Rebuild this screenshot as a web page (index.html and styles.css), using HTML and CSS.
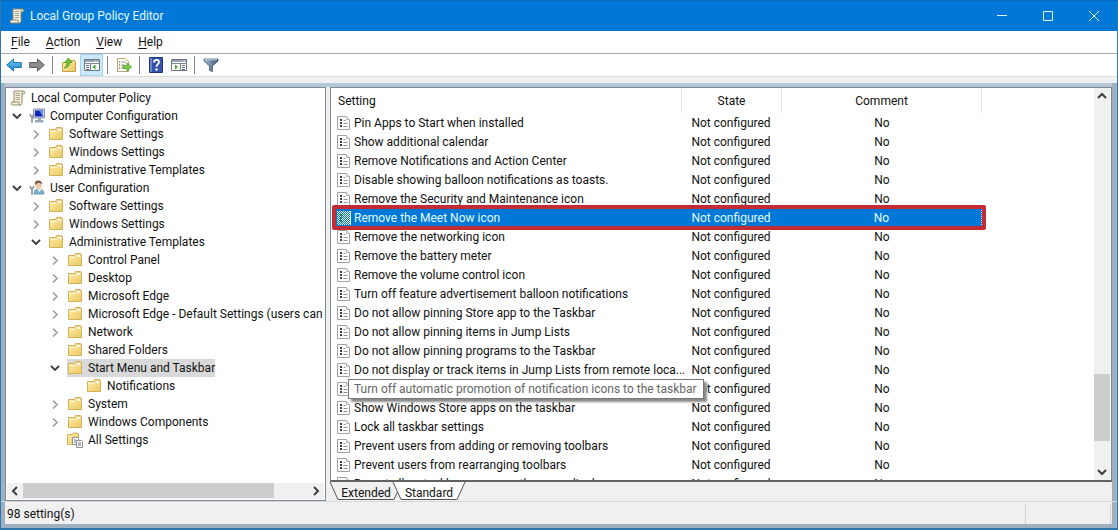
FILE: index.html
```html
<!DOCTYPE html>
<html lang="en">
<head>
<meta charset="utf-8">
<title>Local Group Policy Editor</title>
<link rel="stylesheet" href="styles.css">
</head>
<body>
<svg class="defs" aria-hidden="true">
  <defs>
    <linearGradient id="gold" x1="0" y1="0" x2="1" y2="1"><stop offset="0" stop-color="#fff0ad"/><stop offset="1" stop-color="#ecc75f"/></linearGradient>
    <linearGradient id="blue" x1="0" y1="0" x2="0" y2="1"><stop offset="0" stop-color="#7cc8f2"/><stop offset="1" stop-color="#1583cc"/></linearGradient>
    <linearGradient id="steel" x1="0" y1="0" x2="1" y2="0"><stop offset="0" stop-color="#9fb9d0"/><stop offset="1" stop-color="#3f5a75"/></linearGradient>
    <symbol id="folder" viewBox="0 0 16 16"><path d="M1.500 3.500h6l1-2h5l1 1.500v10.500h-13z" fill="url(#gold)" stroke="#d3b05c"/><path d="M8.500 4.500h5v-2h-4z" fill="#fffbe8" stroke="#dcb95e" stroke-width=".6"/><path d="M2 5.500h7l1-1h4" fill="none" stroke="#fff6cf"/></symbol>
    <symbol id="scroll" viewBox="0 0 16 16"><path d="M4 1h9.500c1.500 0 1.500 3 0 3H12v8.500c0 2-1 2.500-2 2.500H2.500c-1.800 0-1.800-3 0-3H4z" fill="#f6f2dc" stroke="#8f8a74"/><path d="M12 4V2.500C12 1.700 12.600 1 13.300 1M2.500 12H9c0 1.500.3 3 1.500 3" fill="none" stroke="#8f8a74"/><path d="M5.500 3.500h4.500M5.500 5.500h4.500M5.500 7.500h4.500M5.500 9.500h4.500" stroke="#a9a487"/></symbol>
    <symbol id="computer" viewBox="0 0 16 16"><path d="M4.500 1h11v9h-11z" fill="#c8d2e4" stroke="#7483a5" stroke-width=".8"/><path d="M6 2.500h8v6H6z" fill="#1029b5"/><path d="M10 2.500h4v6z" fill="#6e8df0"/><path d="M9 10h3v2H9zM6 12h8.500v2.500H6z" fill="#9ba6b8"/><path d="M1.500 6v2M4.500 6v2M1.500 8.500h3M3 8v7" stroke="#7d8792" stroke-width="1.400" fill="none"/></symbol>
    <symbol id="user" viewBox="0 0 16 16"><path d="M5 14c0-4 2-5 5-5s5 1.500 5 5z" fill="#7fb3cd" stroke="#487d99" stroke-width=".7"/><path d="M8.500 9l2 3 2-3z" fill="#fff"/><ellipse cx="9.500" cy="5" rx="3" ry="4" fill="#efc5a3"/><path d="M6 5C5.500 1 8 .5 9.500 .5s4 1 3.300 4.500C12 3 10.500 2.500 8.500 3z" fill="#70533f"/><path d="M1.500 6v2M4.500 6v2M1.500 8.500h3M3 8v7" stroke="#7d8792" stroke-width="1.400" fill="none"/></symbol>
    <symbol id="all" viewBox="0 0 16 16"><path d="M.500 2.500h5l1-1.500h4l1 1.500v10H.5z" fill="url(#gold)" stroke="#d3b05c"/><path d="M5.500 5.500h5l1 1v6h-6z" fill="#fff" stroke="#8b8f94"/><path d="M9.500 8.500h5l1 1v6h-6z" fill="#fff" stroke="#8b8f94"/><path d="M7 8h2M7 10h2M11 11h3M11 13h3" stroke="#697078"/></symbol>
    <symbol id="policy" viewBox="0 0 14 16"><path d="M.500 1.500h9l3 3v10h-12z" fill="#fff" stroke="#a2a2a2"/><path d="M9.500 1.500v3h3" fill="#eee" stroke="#b8b8b8"/><path d="M3 4h2v2H3zM3 7h2v2H3zM3 10h2v2H3z" fill="#3c3c48"/><path d="M6.500 5.500h2M6.500 8.500h4M6.500 11.500h4" stroke="#8e8e96"/></symbol>
    <pattern id="dots" width="2" height="2" patternUnits="userSpaceOnUse"><path d="M0 0h1v1H0zM1 1h1v1H1z" fill="#19758f"/></pattern>
    <symbol id="policy-on" viewBox="0 0 14 16"><path d="M0 1h14v14H0z" fill="#d9f2f2"/><path d="M0 1h13v14H0z" fill="url(#dots)"/><path d="M3 4h2v2H3zM3 7h2v2H3zM3 10h2v2H3z" fill="#207b68"/></symbol>
    <symbol id="right" viewBox="0 0 10 10"><path d="M3 1.500l4 4-4 4" fill="none" stroke="#a0a0a0" stroke-width="1.700"/></symbol>
    <symbol id="down" viewBox="0 0 10 10"><path d="M1 3l4 4 4-4" fill="none" stroke="#404040" stroke-width="1.900"/></symbol>
    <symbol id="arrow" viewBox="0 0 16 16"><path d="M.700 8l6.800-6v3.500h7.800v5H7.500V14z" stroke-width="1"/></symbol>
  </defs>
</svg>

<header class="titlebar">
  <svg class="app-icon" viewBox="0 0 16 16"><use href="#scroll"/></svg>
  <h1 class="title">Local Group Policy Editor</h1>
  <div class="caption">
    <button class="caption-btn" aria-label="Minimize"><svg viewBox="0 0 12 12"><path d="M1 5.500h10"/></svg></button>
    <button class="caption-btn" aria-label="Maximize"><svg viewBox="0 0 12 12"><path d="M1.500 1.500h9v9h-9z"/></svg></button>
    <button class="caption-btn" aria-label="Close"><svg viewBox="0 0 12 12"><path d="M1 1l10 10M11 1L1 11"/></svg></button>
  </div>
</header>

<nav class="menubar">
  <button class="menu"><u>F</u>ile</button>
  <button class="menu"><u>A</u>ction</button>
  <button class="menu"><u>V</u>iew</button>
  <button class="menu"><u>H</u>elp</button>
</nav>

<div class="toolbar" role="toolbar">
  <button class="tool" aria-label="Back"><svg viewBox="0 0 16 16" fill="url(#blue)" stroke="#2476a8"><use href="#arrow"/></svg></button>
  <button class="tool" aria-label="Forward"><svg class="flip" viewBox="0 0 16 16" fill="#8b8b8b" stroke="#5c5c5c"><use href="#arrow"/></svg></button>
  <span class="sep"></span>
  <button class="tool" aria-label="Up one level"><svg viewBox="0 0 16 16"><path d="M1.500 5.500h5l1-2h6l1 1.500v9.500h-13z" fill="url(#gold)" stroke="#c9a04a"/><path d="M3.500 11C7 10.500 8.500 8.500 8.500 5.500h2.500L7.500 1 3.500 5.500H6C6 8 5 9 3.500 11z" fill="#6fc531" stroke="#3f8a20" stroke-width=".7"/></svg></button>
  <button class="tool tool-on" aria-label="Show or hide console tree" aria-pressed="true"><svg viewBox="0 0 16 16"><path d="M.500 2.500h15v11H.5z" fill="#fff" stroke="#6a7480"/><path d="M1 3h14v2H1z" fill="#98a2b0"/><path d="M11 4h1M13 4h1" stroke="#fff"/><path d="M.500 6.500h15M6.500 6.500v7" stroke="#7c8794"/><path d="M2 8.500h3M2 10.500h3M2 12.500h3" stroke="#5b6b80"/><path d="M11.500 7.500v5l-3-2.500z" fill="#3fa12c"/></svg></button>
  <span class="sep"></span>
  <button class="tool" aria-label="Export list"><svg viewBox="0 0 16 16"><path d="M1.500 1.500h8l3 3v10h-11z" fill="#fffdf0" stroke="#b4a678"/><path d="M3 5h1M3 8h1M3 11h1" stroke="#444"/><path d="M5 5h5M5 8h3M5 11h3" stroke="#8c96a4"/><path d="M7 8.500h4V6l4.500 4-4.500 4v-2.500H7z" fill="#7fd14a" stroke="#44982a" stroke-width=".8"/></svg></button>
  <span class="sep"></span>
  <button class="tool" aria-label="Help"><svg viewBox="0 0 16 16"><path d="M1.500.500h13v15h-13z" fill="#3453aa" stroke="#1d3477"/><path d="M2 1h2v14H2z" fill="#7087cc"/><path d="M6 5.500C6 2 11 2 11 5c0 2.200-2.500 2.200-2.500 4.700" fill="none" stroke="#fff" stroke-width="1.800"/><circle cx="8.500" cy="12.500" r="1.200" fill="#fff"/></svg></button>
  <button class="tool" aria-label="Show or hide action pane"><svg viewBox="0 0 16 16"><path d="M.500 2.500h15v11H.5z" fill="#fff" stroke="#6a7480"/><path d="M1 3h14v2H1z" fill="#98a2b0"/><path d="M11 4h1M13 4h1" stroke="#fff"/><path d="M.500 6.500h15M9.500 6.500v7" stroke="#7c8794"/><path d="M11 8.500h3M11 10.500h3M11 12.500h3" stroke="#5b6b80"/><path d="M4 7.500v5l3-2.500z" fill="#3fa12c"/></svg></button>
  <span class="sep"></span>
  <button class="tool" aria-label="Filter"><svg viewBox="0 0 16 16"><path d="M1 2h14v2L9.500 9v5.500l-3-1V9L1 4z" fill="url(#steel)" stroke="#425d79" stroke-width=".8"/><path d="M2 2.800h12" stroke="#c6d8e8"/></svg></button>
</div>
<div class="band"></div>

<main class="work">
  <section class="pane tree-pane">
    <ul class="tree">
      <li class="node root"><svg class="ico"><use href="#scroll"/></svg><span class="label">Local Computer Policy</span></li>
      <li class="node l1"><svg class="chev"><use href="#down"/></svg><svg class="ico"><use href="#computer"/></svg><span class="label">Computer Configuration</span></li>
      <li class="node l2"><svg class="chev"><use href="#right"/></svg><svg class="ico"><use href="#folder"/></svg><span class="label">Software Settings</span></li>
      <li class="node l2"><svg class="chev"><use href="#right"/></svg><svg class="ico"><use href="#folder"/></svg><span class="label">Windows Settings</span></li>
      <li class="node l2"><svg class="chev"><use href="#right"/></svg><svg class="ico"><use href="#folder"/></svg><span class="label">Administrative Templates</span></li>
      <li class="node l1"><svg class="chev"><use href="#down"/></svg><svg class="ico"><use href="#user"/></svg><span class="label">User Configuration</span></li>
      <li class="node l2"><svg class="chev"><use href="#right"/></svg><svg class="ico"><use href="#folder"/></svg><span class="label">Software Settings</span></li>
      <li class="node l2"><svg class="chev"><use href="#right"/></svg><svg class="ico"><use href="#folder"/></svg><span class="label">Windows Settings</span></li>
      <li class="node l2"><svg class="chev"><use href="#down"/></svg><svg class="ico"><use href="#folder"/></svg><span class="label">Administrative Templates</span></li>
      <li class="node l3"><svg class="chev"><use href="#right"/></svg><svg class="ico"><use href="#folder"/></svg><span class="label">Control Panel</span></li>
      <li class="node l3"><svg class="chev"><use href="#right"/></svg><svg class="ico"><use href="#folder"/></svg><span class="label">Desktop</span></li>
      <li class="node l3"><svg class="chev"><use href="#right"/></svg><svg class="ico"><use href="#folder"/></svg><span class="label">Microsoft Edge</span></li>
      <li class="node l3"><svg class="chev"><use href="#right"/></svg><svg class="ico"><use href="#folder"/></svg><span class="label">Microsoft Edge - Default Settings (users can override)</span></li>
      <li class="node l3"><svg class="chev"><use href="#right"/></svg><svg class="ico"><use href="#folder"/></svg><span class="label">Network</span></li>
      <li class="node l3"><svg class="chev"></svg><svg class="ico"><use href="#folder"/></svg><span class="label">Shared Folders</span></li>
      <li class="node l3"><svg class="chev"><use href="#down"/></svg><span class="picked"><svg class="ico"><use href="#folder"/></svg><span class="label">Start Menu and Taskbar</span></span></li>
      <li class="node l4"><svg class="chev"></svg><svg class="ico"><use href="#folder"/></svg><span class="label">Notifications</span></li>
      <li class="node l3"><svg class="chev"><use href="#right"/></svg><svg class="ico"><use href="#folder"/></svg><span class="label">System</span></li>
      <li class="node l3"><svg class="chev"><use href="#right"/></svg><svg class="ico"><use href="#folder"/></svg><span class="label">Windows Components</span></li>
      <li class="node l3"><svg class="chev"></svg><svg class="ico"><use href="#all"/></svg><span class="label">All Settings</span></li>
    </ul>
    <div class="hbar">
      <button class="bar-btn" aria-label="Scroll left"><svg viewBox="0 0 10 10"><path d="M7 1L3 5l4 4"/></svg></button>
      <div class="hbar-track"><div class="hbar-thumb"></div></div>
      <button class="bar-btn" aria-label="Scroll right"><svg viewBox="0 0 10 10"><path d="M3 1l4 4-4 4"/></svg></button>
    </div>
  </section>

  <section class="detail">
    <div class="pane list-pane">
      <div class="list">
        <table class="grid">
          <colgroup><col class="c-setting"><col class="c-state"><col class="c-comment"></colgroup>
          <thead><tr><th class="first">Setting</th><th>State</th><th>Comment</th></tr></thead>
          <tbody>
            <tr><td><svg class="pol"><use href="#policy"/></svg>Pin Apps to Start when installed</td><td>Not configured</td><td>No</td></tr>
            <tr><td><svg class="pol"><use href="#policy"/></svg>Show additional calendar</td><td>Not configured</td><td>No</td></tr>
            <tr><td><svg class="pol"><use href="#policy"/></svg>Remove Notifications and Action Center</td><td>Not configured</td><td>No</td></tr>
            <tr><td><svg class="pol"><use href="#policy"/></svg>Disable showing balloon notifications as toasts.</td><td>Not configured</td><td>No</td></tr>
            <tr><td><svg class="pol"><use href="#policy"/></svg>Remove the Security and Maintenance icon</td><td>Not configured</td><td>No</td></tr>
            <tr class="selected"><td><svg class="pol"><use href="#policy-on"/></svg>Remove the Meet Now icon</td><td>Not configured</td><td>No</td></tr>
            <tr><td><svg class="pol"><use href="#policy"/></svg>Remove the networking icon</td><td>Not configured</td><td>No</td></tr>
            <tr><td><svg class="pol"><use href="#policy"/></svg>Remove the battery meter</td><td>Not configured</td><td>No</td></tr>
            <tr><td><svg class="pol"><use href="#policy"/></svg>Remove the volume control icon</td><td>Not configured</td><td>No</td></tr>
            <tr><td><svg class="pol"><use href="#policy"/></svg>Turn off feature advertisement balloon notifications</td><td>Not configured</td><td>No</td></tr>
            <tr><td><svg class="pol"><use href="#policy"/></svg>Do not allow pinning Store app to the Taskbar</td><td>Not configured</td><td>No</td></tr>
            <tr><td><svg class="pol"><use href="#policy"/></svg>Do not allow pinning items in Jump Lists</td><td>Not configured</td><td>No</td></tr>
            <tr><td><svg class="pol"><use href="#policy"/></svg>Do not allow pinning programs to the Taskbar</td><td>Not configured</td><td>No</td></tr>
            <tr><td><svg class="pol"><use href="#policy"/></svg>Do not display or track items in Jump Lists from remote loca...</td><td>Not configured</td><td>No</td></tr>
            <tr><td><svg class="pol"><use href="#policy"/></svg><span class="tip">Turn off automatic promotion of notification icons to the taskbar</span></td><td>Not configured</td><td>No</td></tr>
            <tr><td><svg class="pol"><use href="#policy"/></svg>Show Windows Store apps on the taskbar</td><td>Not configured</td><td>No</td></tr>
            <tr><td><svg class="pol"><use href="#policy"/></svg>Lock all taskbar settings</td><td>Not configured</td><td>No</td></tr>
            <tr><td><svg class="pol"><use href="#policy"/></svg>Prevent users from adding or removing toolbars</td><td>Not configured</td><td>No</td></tr>
            <tr><td><svg class="pol"><use href="#policy"/></svg>Prevent users from rearranging toolbars</td><td>Not configured</td><td>No</td></tr>
            <tr><td><svg class="pol"><use href="#policy"/></svg>Do not allow taskbars on more than one display</td><td>Not configured</td><td>No</td></tr>
          </tbody>
        </table>
      </div>
      <div class="vbar">
        <button class="bar-btn" aria-label="Scroll up"><svg viewBox="0 0 10 10"><path d="M1 7l4-4 4 4"/></svg></button>
        <div class="vbar-track"><div class="vbar-thumb"></div></div>
        <button class="bar-btn" aria-label="Scroll down"><svg viewBox="0 0 10 10"><path d="M1 3l4 4 4-4"/></svg></button>
      </div>
    </div>
    <div class="tabs" role="tablist">
      <button class="tab" role="tab"><svg class="tab-shape" viewBox="0 0 72 18" preserveAspectRatio="none"><path d="M0 0l8 17.500h56L72 0" fill="#f0f0f0" stroke="#555"/></svg><span class="tab-text">Extended</span></button>
      <button class="tab tab-on" role="tab" aria-selected="true"><svg class="tab-shape" viewBox="0 0 72 18" preserveAspectRatio="none"><path d="M0 0l8 17.500h56L72 0" fill="#fff" stroke="#555"/></svg><span class="tab-text">Standard</span></button>
    </div>
  </section>
</main>

<footer class="status"><span class="status-main">98 setting(s)</span><span class="status-cell"></span><span class="status-cell end"></span></footer>
</body>
</html>
```
FILE: styles.css
```css
*, *::after { box-sizing: border-box; }

body {
  margin: 0;
  height: 100vh;
  display: flex;
  flex-direction: column;
  overflow: hidden;
  background: #f0f0f0;
  border: 1px solid #2f76ad;
  border-top-color: #0b69b8;
  border-bottom-width: 2px;
  font: 12px/18px Roboto, "Open Sans", sans-serif;
  color: #111;
}

button {
  margin: 0;
  padding: 0;
  border: 0;
  background: none;
  font: inherit;
  color: inherit;
}

svg { display: block; flex: none; }
.defs { position: absolute; width: 0; height: 0; }

.titlebar {
  flex: none;
  display: flex;
  align-items: center;
  height: 30px;
  padding-left: 8px;
  background: #0078d7;
  color: #e2fbff;
}
.app-icon { width: 16px; height: 16px; }
.title { flex: 1; margin: 0 0 0 5px; font-size: 12px; font-weight: 400; }
.caption { display: flex; }
.caption-btn { display: grid; place-items: center; width: 46px; height: 30px; }
.caption-btn svg { width: 12px; height: 12px; fill: none; stroke: #e2fbff; }

.menubar {
  flex: none;
  display: flex;
  gap: 16px;
  height: 23px;
  padding: 2px 10px;
  background: #fff;
  border-bottom: 1px solid #a7abad;
}
.menu u { text-underline-offset: 2px; }

.toolbar {
  flex: none;
  display: flex;
  align-items: center;
  height: 23px;
  padding-left: 1px;
  background: #fff;
  border-bottom: 1px solid #dcdcdc;
}
.tool { display: grid; place-items: center; width: 23px; height: 22px; }
.tool svg { width: 16px; height: 16px; }
.tool .flip { transform: scaleX(-1); }
.tool-on { background: #cce8fb; border: 1px solid #a5d3f2; }
.sep { width: 1px; height: 18px; margin: 0 4px; background: #858585; }
.band { flex: none; height: 6px; background: #f0f0f0; }

.work {
  flex: 1;
  min-height: 0;
  display: flex;
  gap: 4px;
  padding: 4px 5px 0 4px;
  background: linear-gradient(#b6c8d6 0 4px, #f0f0f0 4px);
  box-shadow: inset 4px 0 #9db1c1, inset -5px 0 #9db1c1;
}
.pane { background: #fff; border: 1px solid #7b8895; }
.tree-pane {
  width: 29%;
  flex: none;
  display: flex;
  flex-direction: column;
  overflow: hidden;
}
.tree { flex: 1; min-height: 0; margin: 0; padding: 1px 0 0 4px; list-style: none; overflow: hidden; }
.node, .picked { display: flex; align-items: center; height: 18px; white-space: nowrap; }
.ico { width: 16px; height: 16px; }
.chev { width: 10px; height: 10px; margin-right: 7px; }
.label { padding-left: 5px; }
.l1 { padding-left: 2px; }
.l2 { padding-left: 21px; }
.l3 { padding-left: 40px; }
.l4 { padding-left: 59px; }
.picked { background: #d9d9d9; }

.hbar { flex: none; display: flex; height: 17px; padding: 0 1px 2px; }
.bar-btn { flex: none; display: grid; place-items: center; width: 16px; height: 16px; background: #f0f0f0; }
.bar-btn svg { width: 10px; height: 10px; fill: none; stroke: #404040; stroke-width: 2; }
.hbar-track { flex: 1; background: #f0f0f0; height: 16px; }
.hbar-thumb { width: 88%; height: 15px; background: #cdcdcd; }

.detail { flex: 1; min-width: 0; display: flex; flex-direction: column; }
.list-pane { flex: 1; min-height: 0; display: flex; border-bottom: 2px solid #626262; }
.list { flex: 1; min-width: 0; padding-left: 1px; overflow: hidden; }
.grid { width: 650px; table-layout: fixed; border-collapse: separate; border-spacing: 0; }
.c-setting { width: 350px; }
.c-state { width: 100px; }
.c-comment { width: 200px; }
.grid th { height: 25px; padding: 0; font-weight: 400; border-right: 1px solid #e2e2e2; }
.grid .first { padding-left: 6px; text-align: left; }
.grid td { height: 19px; padding: 1px 0 0; line-height: 18px; text-align: center; white-space: nowrap; }
.grid td:nth-child(2) { padding-right: 2px; }
.grid td:first-child { display: flex; align-items: center; padding-left: 5px; text-align: left; position: relative; }
.pol { width: 14px; height: 16px; margin-right: 3px; }
.selected { color: #e2fbff; }
.selected td { background: #0078d7; }
.selected td:last-child { border-right: 1px dotted #d7e8f5; }
/* red frame round the whole highlighted row */
.selected td:first-child::after {
  content: "";
  position: absolute;
  left: 0;
  top: -3px;
  z-index: 1;
  width: 654px;
  height: 25px;
  border: 4px solid #c32b35;
  border-radius: 2px;
}
.tip {
  position: absolute;
  left: 16px;
  top: 0;
  z-index: 1;
  padding: 0 6px 0 5px;
  line-height: 18px;
  color: #666;
  background: #fff;
  border: 1px solid #777;
  box-shadow: 3px 3px 2px #8b8b8b;
}

.vbar { flex: none; display: flex; flex-direction: column; width: 17px; padding-right: 1px; }
.vbar-track { flex: 1; display: flex; flex-direction: column; justify-content: flex-end; padding-bottom: 23px; background: #f0f0f0; }
.vbar-thumb { height: 20%; background: #cdcdcd; }

.tabs { flex: none; display: flex; height: 19px; }
.tab { position: relative; width: 72px; height: 18px; padding-top: 2px; margin-right: -9px; }
.tab-on { z-index: 1; }
.tab-shape { position: absolute; inset: 0; width: 100%; height: 100%; overflow: visible; }
.tab-text { position: relative; }

.status {
  flex: none;
  display: flex;
  align-items: center;
  height: 27px;
  padding: 3px 5px 1px 6px;
  border-top: 1px solid #d7d7d7;
  border-bottom: 4px solid #9db1c1;
  box-shadow: inset 4px 0 #9db1c1, inset -5px 0 #9db1c1;
}
.status-main { flex: 1; }
.status-cell { width: 85px; height: 20px; border-left: 1px solid #d0d0d0; }
.status-cell.end { width: 2px; }
```
